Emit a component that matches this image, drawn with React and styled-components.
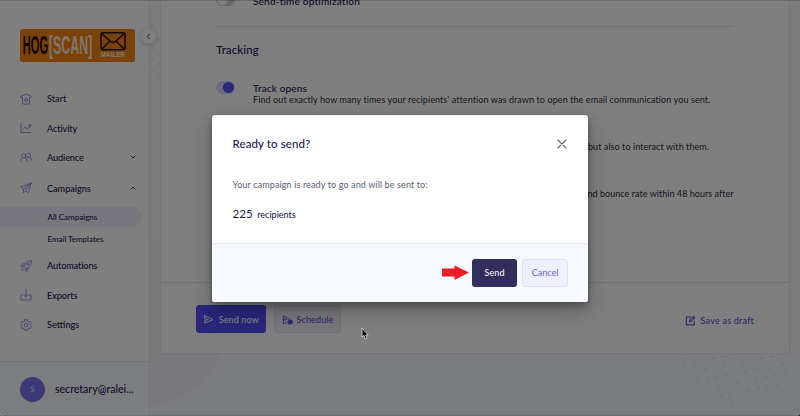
import React from "react";
import styled, { createGlobalStyle } from "styled-components";

const GlobalStyle = createGlobalStyle`
  *{box-sizing:border-box;}
  body{margin:0;background:#111;font-family:Lato,"Open Sans",sans-serif;color:#211c52;}
  button{font-family:inherit;}
`;

const Screen = styled.div`
  position:relative;display:flex;width:800px;height:416px;overflow:hidden;
  background:#f5f7fb;border-radius:0 0 3px 3px;
`;
const Backdrop = styled.svg`position:absolute;inset:0;`;
const Sidebar = styled.aside`
  position:relative;display:flex;flex-direction:column;width:150px;flex:none;
  background:#fff;border-right:1px solid #e6eaf1;padding-top:29px;
`;
const LogoSvg = styled.svg`display:block;margin:0 0 22px 20px;flex:none;`;
const Collapse = styled.button`
  position:absolute;left:141px;top:29px;width:15px;height:15px;border:0;padding:0;border-radius:50%;
  background:#fff;display:flex;align-items:center;justify-content:center;box-shadow:0 1px 4px rgba(40,40,90,.25);
`;
const Nav = styled.nav`display:flex;flex-direction:column;flex:1;`;
const NavRow = styled.a`
  display:flex;align-items:center;height:29.4px;padding:0 13px 0 20px;font-size:9.2px;font-weight:500;
  letter-spacing:${p => p.$ls || 0}px;margin-top:${p => p.$mt || 0}px;
  & > svg:first-child{margin-right:15px;flex:none;}
  & > span{flex:1;}
`;
const SubRow = styled.a`
  display:flex;align-items:center;height:20px;width:142px;padding-left:47.5px;font-size:8px;font-weight:500;
  letter-spacing:${p => p.$ls || 0}px;
  border-radius:0 10px 10px 0;margin-top:${p => (p.$active ? 3.5 : 2)}px;
  background:${p => (p.$active ? "#efeefb" : "transparent")};
`;
const Account = styled.div`
  display:flex;align-items:center;gap:10px;height:55px;padding-left:20px;background:#f8fafd;
  border-top:1px solid #e3e8ef;font-size:10.5px;font-weight:500;
`;
const Avatar = styled.div`
  width:25px;height:25px;border-radius:50%;background:#7672f0;color:#d9d8ff;font-size:8px;
  display:flex;align-items:center;justify-content:center;
`;
const Card = styled.main`
  position:relative;display:flex;flex-direction:column;width:630px;height:354px;margin-left:10px;
  background:#fff;border:1px solid #e6eaf1;border-top:0;
`;
const CardBody = styled.div`height:282px;padding:0 55px;overflow:hidden;`;
const Option = styled.section`
  display:flex;align-items:flex-start;height:${p => p.$h || 47}px;margin-top:${p => p.$mt || 0}px;
`;
const Toggle = styled.span`
  width:19px;height:13px;border-radius:7px;margin:${p => p.$mt || 0}px 18px 0 0;flex:none;display:flex;padding:1px;
  justify-content:${p => (p.$on ? "flex-end" : "flex-start")};
  background:${p => (p.$on ? "#d9d7f8" : "#c9ced9")};
  &::after{content:"";width:11px;height:11px;border-radius:50%;background:${p => (p.$on ? "#5650f2" : "#fff")};}
`;
const OptionBody = styled.div`padding-top:${p => p.$pt || 0}px;`;
const OptionTitle = styled.h3`
  margin:${p => p.$mt || 0}px 0 0;font-size:10px;line-height:12px;font-weight:500;letter-spacing:${p => p.$ls ?? 0.14}px;
`;
const OptionText = styled.p`
  margin:0;font-size:9px;line-height:12px;letter-spacing:${p => p.$ls || 0.095}px;color:#2d2d3c;white-space:nowrap;
  padding-left:${p => p.$indent || 0}px;
`;
const Rule = styled.hr`border:0;border-top:1px solid #dfe3e9;margin:0;`;
const SectionTitle = styled.h2`
  margin:15px 0 0;font-size:11.5px;line-height:16px;font-weight:500;letter-spacing:.08px;
`;
const CardFooter = styled.footer`
  display:flex;align-items:flex-start;gap:8px;border-top:1px solid #dfe3e9;height:71px;padding:22px 34px 0 35px;
`;
const Action = styled.button`
  display:flex;align-items:center;justify-content:${p => (p.$plain ? "flex-start" : "center")};
  gap:${p => p.$gap || 0}px;width:${p => p.$w}px;height:28px;padding:0;white-space:nowrap;flex:none;
  border-radius:3px;border:1px solid ${p => p.$border || "transparent"};background:${p => p.$bg || "transparent"};
  color:${p => p.$fg};font-size:9px;font-weight:500;letter-spacing:${p => p.$ls || 0}px;
  margin-left:${p => (p.$push ? "auto" : 0)};margin-top:${p => p.$mt || 0}px;
`;
const Overlay = styled.div`
  position:absolute;inset:0;display:flex;align-items:center;justify-content:center;background:rgba(0,0,0,.5);
  box-shadow:inset 0 1px rgba(0,0,0,.16),inset 0 -1px rgba(0,0,0,.1);
`;
const Dialog = styled.div`
  width:376px;height:187px;border-radius:3px;background:#fff;overflow:hidden;display:flex;flex-direction:column;
  box-shadow:0 5px 8px rgba(0,0,0,.26),0 10px 26px rgba(0,0,0,.2),0 0 3px rgba(0,0,0,.2);
`;
const DialogBody = styled.div`flex:1;padding:21px 20.5px 0;`;
const DialogHead = styled.header`display:flex;align-items:center;justify-content:space-between;height:16px;`;
const DialogTitle = styled.h1`margin:0;font-size:11.5px;font-weight:500;line-height:16px;letter-spacing:.1px;`;
const DialogText = styled.p`margin:27px 0 0;font-size:9px;line-height:12px;letter-spacing:.12px;color:#576173;`;
const Count = styled.p`
  margin:15px 0 0;display:flex;align-items:baseline;gap:4.5px;font-size:9px;line-height:16px;font-weight:500;
  b{font-size:11.6px;font-weight:400;}
`;
const DialogFooter = styled.footer`
  display:flex;align-items:center;justify-content:flex-end;gap:5px;height:59px;padding-right:20px;
  background:#f6f9fd;border-top:1px solid #e6eaf0;
`;
const Pointer = styled.svg`margin-right:-2px;`;
const Cursor = styled.svg`position:absolute;left:361px;top:327px;`;

const LineIcon = ({ children, size = 12, box = 24, w = 1.6, color = "#7c79de" }) => (
  <svg width={size} height={size} viewBox={`0 0 ${box} ${box}`} fill="none" stroke={color}
    strokeWidth={w} strokeLinecap="round" strokeLinejoin="round">{children}</svg>
);
const HomeIcon = () => <LineIcon><path d="M2 9V6.500L12 2l10 4.500V9h-3v12a1 1 0 0 1-1 1H6a1 1 0 0 1-1-1V9H2z" /><circle cx="12" cy="14" r="2.800" /></LineIcon>;
const ChartIcon = () => <LineIcon><path d="M2 3v18h20M5.500 15l5-5 4 4 7-8M17.500 6h4v4" /></LineIcon>;
const PeopleIcon = () => <LineIcon><circle cx="7.500" cy="9.500" r="4.300" /><path d="M1.500 21v-2.500c0-2 1.500-4 3.500-4.500M13.500 21v-2.500c0-2-1.500-4-3.500-4.500M14 5.500a4 4 0 1 1 3 6.500 4 4 0 0 1-3.500-1.500M19.500 12c2 .8 3 2.500 3 6M15.500 12.500c-1 .4-1.800 1-2.300 2" /></LineIcon>;
const PlaneIcon = () => <LineIcon><path d="M22.500 2 1.500 10l5.500 4.500L22.500 2zM22.500 2 17 21.500l-6-4L22.500 2zM7 14.500v7.500l4-4.500" /></LineIcon>;
const RocketIcon = () => <LineIcon><path d="M22.500 2c-5-.5-9.500 1.500-13 6.500l-1.500 4 4.500 4.500 4-1.500C21.500 12 23 7 22.500 2zM10 8 5.500 7.500 1.500 12l6.500.5M16.500 15l.3 3.500L12 23l.5-6M6 14.500c-2 .5-3 3-2.500 6 3 .5 5-.5 6-2.500" /><circle cx="15.500" cy="8.500" r="2" /></LineIcon>;
const ExportIcon = () => <LineIcon><path d="M5 12H2v10h20V12h-3M12 1.500v14M7.500 11l4.500 4.500 4.500-4.500" /></LineIcon>;
const GearIcon = () => <LineIcon><circle cx="12" cy="12" r="3.500" /><path d="M9.500 1.500h5l.8 3.400 1.800 1 3.400-1 2.300 4-2.500 2.300v1.700l2.500 2.300-2.300 4-3.400-1-1.800 1-.8 3.300h-5l-.8-3.300-1.800-1-3.400 1-2.300-4 2.500-2.300v-1.700L1.200 8.900l2.300-4 3.400 1 1.800-1z" /></LineIcon>;
const Chevron = ({ d }) => <LineIcon size={6} box={6} w={0.9} color="#28244f"><path d={d} /></LineIcon>;

// Dotted triangle in the lower right: [row, first column, last column].
const dotRows = [[-5, 4, 13], [-4, 3, 12], [-3, 2, 12], [-2, 1, 11], [-1, 1, 11], [0, 0, 10], [1, 0, 8], [2, 0, 6], [3, 0, 1]];
const dots = dotRows.flatMap(([b, from, to]) =>
  Array.from({ length: to - from + 1 }, (_, i) => [698 + (from + i) * 9.4 + b * 11.3, 381 - (from + i) * 1.9 + b * 7.6]));
const stripDots = [[157, 16], [152, 26], [159, 39], [152, 48], [158, 54], [153, 59], [159, 64], [152, 70], [158, 74]];

const Logo = () => (
  <LogoSvg width="115" height="33" viewBox="0 0 115 33">
    <rect width="115" height="33" rx="2.500" fill="#f5850f" />
    <g fontFamily="Liberation Sans, Arial, sans-serif" fontWeight="700">
      <text x="2.800" y="25.300" fontSize="25" textLength="25.200" lengthAdjust="spacingAndGlyphs" fill="#1b0c08">HOG</text>
      <text x="28.800" y="25.300" fontSize="25" textLength="43.500" lengthAdjust="spacingAndGlyphs" fill="#ffead8">[SCAN]</text>
      <text x="80.800" y="28.300" fontSize="7.600" textLength="24.300" lengthAdjust="spacingAndGlyphs" fill="#fff4ea">MAILER</text>
    </g>
    <g fill="none" stroke="#1b0c08" strokeWidth="1.500" strokeLinejoin="round">
      <rect x="81" y="3.800" width="24" height="17" rx="2" />
      <path d="m82 5 8.700 7.500a3.500 3.500 0 0 0 4.600 0L104 5M82 20l8-8M104 20l-8-8" />
    </g>
  </LogoSvg>
);

export default function App() {
  return (
    <Screen>
      <GlobalStyle />
      <Backdrop width="800" height="416">
        <circle cx="144" cy="323" r="83" fill="#f3f0f8" />
        <g fill="#e8ebf2">
          {dots.map(([x, y], i) => <circle key={i} cx={x} cy={y} r="1.500" />)}
          {stripDots.map(([x, y], i) => <circle key={i} cx={x} cy={y} r="1.500" />)}
        </g>
      </Backdrop>
      <Sidebar>
        <Logo />
        <Nav>
          <NavRow><HomeIcon /><span>Start</span></NavRow>
          <NavRow $ls={-0.14}><ChartIcon /><span>Activity</span></NavRow>
          <NavRow $ls={-0.14}><PeopleIcon /><span>Audience</span><Chevron d="M1 2l2 2 2-2" /></NavRow>
          <NavRow $mt={1.5} $ls={-0.06}><PlaneIcon /><span>Campaigns</span><Chevron d="M1 4l2-2 2 2" /></NavRow>
          <SubRow $active>All Campaigns</SubRow>
          <SubRow $ls={-0.03}>Email Templates</SubRow>
          <NavRow $mt={2.5} $ls={-0.15}><RocketIcon /><span>Automations</span></NavRow>
          <NavRow $ls={-0.1}><ExportIcon /><span>Exports</span></NavRow>
          <NavRow><GearIcon /><span>Settings</span></NavRow>
        </Nav>
        <Account><Avatar>S</Avatar><span>secretary@ralei...</span></Account>
      </Sidebar>
      <Card>
        <CardBody>
          <Option $h={26}>
            <Toggle $mt={-7} />
            <OptionTitle $mt={-5} $ls={0.2}>Send-time optimization</OptionTitle>
          </Option>
          <Rule />
          <SectionTitle>Tracking</SectionTitle>
          <Option $mt={23} $h={48}>
            <Toggle $on />
            <OptionBody $pt={1}>
              <OptionTitle>Track opens</OptionTitle>
              <OptionText>Find out exactly how many times your recipients' attention was drawn to open the email communication you sent.</OptionText>
            </OptionBody>
          </Option>
          <Option>
            <Toggle $on />
            <OptionBody>
              <OptionTitle>Track clicks</OptionTitle>
              <OptionText $indent={335} $ls={0.07}>but also to interact with them.</OptionText>
            </OptionBody>
          </Option>
          <Option>
            <Toggle $on />
            <OptionBody>
              <OptionTitle>Track results</OptionTitle>
              <OptionText $indent={330} $ls={0.04}>and bounce rate within 48 hours after</OptionText>
            </OptionBody>
          </Option>
        </CardBody>
        <CardFooter>
          <Action $w={70} $gap={4.5} $bg="#544ffa" $fg="#fff" $ls={0.13}>
            <LineIcon size={11} box={12} w={1} color="#fff"><path d="M2 2l9 4-9 4V7l4-1-4-1z" /></LineIcon>Send now
          </Action>
          <Action $w={67} $gap={4} $bg="#f1f0fb" $border="#e3e2f5" $fg="#5a54dc" $ls={0.12}>
            <LineIcon size={11} box={12} w={1} color="#5550e0"><path d="M5 9.500 1.500 10.500V2l7 3.500M1.500 5l4 1-4 1" /><circle cx="8.800" cy="8.800" r="2.400" fill="#5550e0" /></LineIcon>Schedule
          </Action>
          <Action $plain $push $w={71} $gap={5} $fg="#5a52dc" $ls={0.22} $mt={1}>
            <LineIcon size={11} box={12} w={1.2} color="#5550e0"><path d="M6 2H1.500v9h9V6.500M5 7.500l.4-2L9.500 1.300l1.600 1.600L7 7z" /></LineIcon>Save as draft
          </Action>
        </CardFooter>
      </Card>
      <Collapse><LineIcon size={7} box={7} w={0.9} color="#28244f"><path d="M4.500 1.200 2.200 3.500l2.300 2.300" /></LineIcon></Collapse>
      <Overlay>
        <Dialog>
          <DialogBody>
            <DialogHead>
              <DialogTitle>Ready to send?</DialogTitle>
              <LineIcon size={12} box={12} w={1.1} color="#5a6580"><path d="m2 2 8 8M10 2l-8 8" /></LineIcon>
            </DialogHead>
            <DialogText>Your campaign is ready to go and will be sent to:</DialogText>
            <Count><b>225</b>recipients</Count>
          </DialogBody>
          <DialogFooter>
            <Pointer width="28" height="16" viewBox="0 0 28 16"><path d="M1 3.500h12.500V0.500L28 7.500 13.500 15v-3.500H1z" fill="#ec1c24" /></Pointer>
            <Action $w={45} $bg="#322d5c" $fg="#f1f0fa" $ls={0.08}>Send</Action>
            <Action $w={46} $bg="#f0effe" $border="#e0dff8" $fg="#716be6">Cancel</Action>
          </DialogFooter>
        </Dialog>
      </Overlay>
      <Cursor width="8" height="13" viewBox="0 0 8 13"><path d="M1 1v9l2-1.700L4.300 12l1.700-.8L4.700 8H7.200z" fill="#000" stroke="#ddd" strokeWidth=".8" /></Cursor>
    </Screen>
  );
}
